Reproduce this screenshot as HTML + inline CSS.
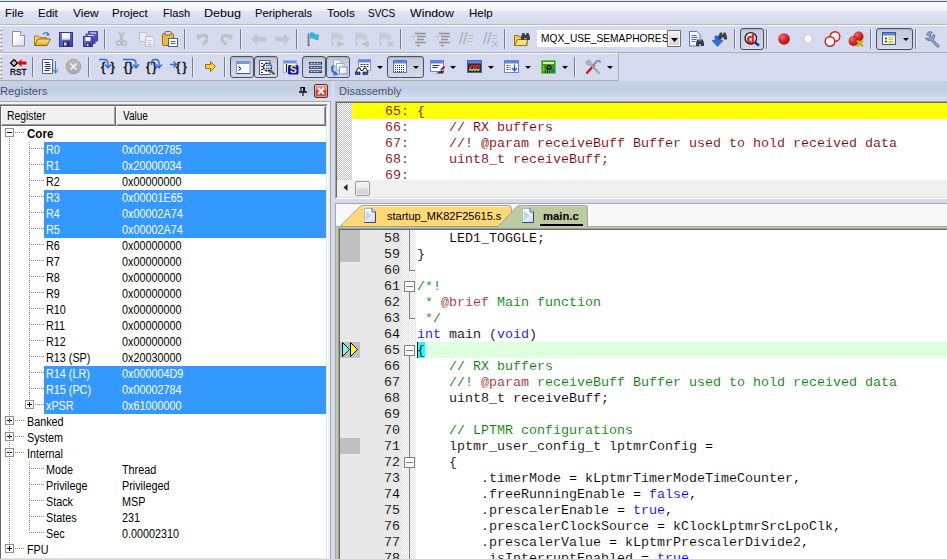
<!DOCTYPE html>
<html><head><meta charset="utf-8"><title>uVision</title>
<style>
*{box-sizing:border-box;margin:0;padding:0}
html,body{width:947px;height:559px;overflow:hidden;background:#d5daee}
body{position:relative;font-family:"Liberation Sans",sans-serif;font-size:12px;color:#000}
.abs,svg.i{position:absolute}
svg.i{overflow:visible}
#topline{left:0;top:0;width:947px;height:2px;background:linear-gradient(#e6e9f4 0 1px,#526272 1px 2px)}
#menubar{left:0;top:2px;width:947px;height:23px;background:linear-gradient(#ffffff 0,#eef0f9 9px,#dfe3f2 9px,#d5daee 22px,#b4b9c9 22px,#b4b9c9 23px)}
#menubar span{position:absolute;top:3px;font-size:12.5px;line-height:16px;white-space:nowrap}
.grip{position:absolute;left:0;width:2px;height:24px;background:repeating-linear-gradient(#fff 0 1px,#9aa2b6 1px 3px,transparent 3px 4px)}
.grip:after{content:"";position:absolute;left:0;top:0;width:1px;height:24px;background:repeating-linear-gradient(#fff 0 2px,transparent 2px 4px)}
.sep{position:absolute;width:1px;height:20px;background:#747c90}
.sep:after{content:"";position:absolute;left:1px;top:0;width:1px;height:20px;background:#eef1f8}
.pbtn{position:absolute;height:22px;border:1px solid #4b5262;border-radius:3px;background:linear-gradient(#c3c9da,#cdd3e3 60%,#d5dae8);box-shadow:inset 0 1px 1px #aab1c4}
.dd{position:absolute;width:0;height:0;border:3px solid transparent;border-top:3px solid #000;border-bottom:0}
.phead{top:81px;height:20px;background:linear-gradient(#c8d3e4,#bfcde1 40%,#d6e0ef);font-size:12px;line-height:20px;color:#4c5870;white-space:nowrap}
.rrow{position:absolute;left:0;height:16px;font-size:11px;line-height:16px;white-space:nowrap}
.t{position:absolute;font-size:12px;line-height:16px;white-space:nowrap;transform:scaleX(.9);transform-origin:0 0}
.w{color:#fff}
.tx{position:absolute;white-space:nowrap;transform-origin:0 0}
.code{font-family:"Liberation Mono",monospace;font-size:13.33px;line-height:16px;white-space:pre;position:absolute;-webkit-text-stroke:.1px #fff}
.g{color:#008000}.b{color:#0000ff}.m{color:#800000}.r{color:#a52a2a}
.ln{position:absolute;font-family:"Liberation Mono",monospace;font-size:13.33px;line-height:16px;text-align:right;width:60px;-webkit-text-stroke:.1px #e8e8e8}
</style></head><body>
<div id="topline" class="abs"></div>
<div id="menubar" class="abs">
</div>
<div class="tx" style="left:5px;top:5.02px;font-size:11.5px;line-height:16px;transform:scaleX(1);">File</div>
<div class="tx" style="left:38px;top:5.02px;font-size:11.5px;line-height:16px;transform:scaleX(1);">Edit</div>
<div class="tx" style="left:73px;top:5.02px;font-size:11.5px;line-height:16px;transform:scaleX(1.04);">View</div>
<div class="tx" style="left:112px;top:5.02px;font-size:11.5px;line-height:16px;transform:scaleX(1);">Project</div>
<div class="tx" style="left:163.04px;top:5.02px;font-size:11.5px;line-height:16px;transform:scaleX(0.963);">Flash</div>
<div class="tx" style="left:203.91px;top:5.02px;font-size:11.5px;line-height:16px;transform:scaleX(1.0938);">Debug</div>
<div class="tx" style="left:255.02px;top:5.02px;font-size:11.5px;line-height:16px;transform:scaleX(0.9825);">Peripherals</div>
<div class="tx" style="left:327px;top:5.02px;font-size:11.5px;line-height:16px;transform:scaleX(1.0385);">Tools</div>
<div class="tx" style="left:368.13px;top:5.02px;font-size:11.5px;line-height:16px;transform:scaleX(0.8667);">SVCS</div>
<div class="tx" style="left:410px;top:5.02px;font-size:11.5px;line-height:16px;transform:scaleX(1.0732);">Window</div>
<div class="tx" style="left:469px;top:5.02px;font-size:11.5px;line-height:16px;transform:scaleX(1);">Help</div>
<div class="abs" style="left:0;top:25px;width:947px;height:1px;background:#fbfcfe"></div>
<div class="abs" style="left:0;top:52px;width:947px;height:1px;background:#aeacb2"></div>
<div class="abs" style="left:0;top:53px;width:618px;height:1px;background:#fbfcfe"></div>
<div class="abs" style="left:0;top:80px;width:619px;height:1px;background:#aeacb2"></div>
<div class="abs" style="left:618px;top:53px;width:1px;height:28px;background:#aeacb2"></div>
<div class="abs grip" style="top:28px"></div>
<div class="abs grip" style="top:56px"></div>
<div class="sep" style="left:104px;top:29px"></div>
<div class="sep" style="left:184px;top:29px"></div>
<div class="sep" style="left:240px;top:29px"></div>
<div class="sep" style="left:296px;top:29px"></div>
<div class="sep" style="left:400px;top:29px"></div>
<div class="sep" style="left:504px;top:29px"></div>
<div class="sep" style="left:734px;top:29px"></div>
<div class="sep" style="left:766px;top:29px"></div>
<div class="sep" style="left:870px;top:29px"></div>
<div class="sep" style="left:915px;top:29px"></div>
<div class="sep" style="left:32px;top:57px"></div>
<div class="sep" style="left:88px;top:57px"></div>
<div class="sep" style="left:192px;top:57px"></div>
<div class="sep" style="left:224px;top:57px"></div>
<div class="sep" style="left:574px;top:57px"></div>
<svg class="i" style="left:12px;top:31px" width="13" height="16" viewBox="0 0 13 16" ><defs><linearGradient id="gd" x1="0" y1="0" x2="1" y2="1"><stop offset=".3" stop-color="#fff"/><stop offset="1" stop-color="#d9dff0"/></linearGradient><linearGradient id="gs" x1="0" y1="0" x2="1" y2="1"><stop offset="0" stop-color="#7d7ddc"/><stop offset="1" stop-color="#3a3aa4"/></linearGradient><linearGradient id="gf" x1="0" y1="0" x2="0" y2="1"><stop offset="0" stop-color="#fbe38e"/><stop offset="1" stop-color="#eaa91c"/></linearGradient></defs><path d="M.5 .5h8l4 4v10.500h-12z" fill="url(#gd)" stroke="#8f9095"/><path d="M8.500 .5v4h4" fill="#f2f4fa" stroke="#8f9095"/></svg>
<svg class="i" style="left:34px;top:31px" width="17" height="16" viewBox="0 0 17 16" ><path d="M.5 14.500v-9.500h4l1.500 1.500h6.500v2" fill="#f2cf6e" stroke="#a9822a"/><path d="M.5 14.500l3.500-6.500h12.500l-3.500 6.500z" fill="url(#gf)" stroke="#8a6414"/><path d="M8.500 3.500c2-2.500 5-2.500 6.500 0" fill="none" stroke="#4f7cc4" stroke-width="1.200"/><path d="M13.500 1.500l2.300 2.800-3.300.500z" fill="#3b66b8"/></svg>
<svg class="i" style="left:59px;top:32px" width="14" height="15" viewBox="0 0 14 15" ><rect x=".5" y=".5" width="13" height="14" fill="url(#gs)" stroke="#34349a"/><rect x="3" y="1" width="8" height="6.500" fill="#f4f5fb"/><path d="M3 6.500h8v1h-8z" fill="#c8cbe2"/><rect x="4" y="9.500" width="6.500" height="5" fill="#2a2a62"/><rect x="5" y="10.500" width="2.500" height="3" fill="#d8d9e8"/></svg>
<svg class="i" style="left:83px;top:31px" width="15" height="16" viewBox="0 0 15 16" ><rect x="5.500" y=".5" width="9" height="9.500" fill="url(#gs)" stroke="#4a4aae"/><rect x="7.500" y="1.500" width="5.500" height="2" fill="#e8e9f8"/><rect x="3" y="3" width="9" height="9.500" fill="url(#gs)" stroke="#4a4aae"/><rect x="5" y="4" width="5.500" height="2" fill="#e8e9f8"/><rect x=".5" y="5.500" width="9" height="10" fill="url(#gs)" stroke="#34349a"/><rect x="2.500" y="6" width="5" height="4" fill="#f2f3fb"/><rect x="3" y="12" width="4.500" height="3.500" fill="#2a2a62"/><rect x="3.800" y="12.800" width="1.700" height="2.200" fill="#d8d9e8"/></svg>
<svg class="i" style="left:116px;top:31px" width="11" height="16" viewBox="0 0 11 16" ><path d="M3 .500l3.500 9M8 .500l-3.500 9" stroke="#b4b8c2" stroke-width="1.600" fill="none"/><circle cx="2.800" cy="12.300" r="2.200" fill="none" stroke="#b4b8c2" stroke-width="1.500"/><circle cx="8.200" cy="12.300" r="2.200" fill="none" stroke="#b4b8c2" stroke-width="1.500"/></svg>
<svg class="i" style="left:139px;top:31px" width="16" height="16" viewBox="0 0 16 16" ><path d="M.5 1.500h6l2 2v7h-8z" fill="#eceef3" stroke="#b9bdc8"/><path d="M6.500 5.500h6l2.500 2.500v7h-8.500z" fill="#f2f3f7" stroke="#b9bdc8"/><path d="M8.500 9.500h4M8.500 11.500h4M8.500 13.500h4" stroke="#c5c8d2"/></svg>
<svg class="i" style="left:162px;top:31px" width="16" height="16" viewBox="0 0 16 16" ><rect x=".5" y="2.500" width="11" height="12" rx="1" fill="#e9b93f" stroke="#9a6c10"/><rect x="3" y=".500" width="6" height="3.500" rx="1" fill="#d8d8de" stroke="#6a6a72"/><rect x="6.500" y="7.500" width="9" height="8" fill="#f6f7fb" stroke="#56607c"/><path d="M8.500 10.500h5M8.500 12.500h5" stroke="#56607c"/></svg>
<svg class="i" style="left:196px;top:32px" width="13" height="14" viewBox="0 0 13 14" ><path d="M3.500 5.500c2-3.500 8-3 7.500 1.500c-.300 2.500-2 4-4.500 5.500" fill="none" stroke="#bcbfc9" stroke-width="2.800"/><path d="M0 2.500l6.500 .500l-4.500 5.500z" fill="#bcbfc9"/></svg>
<svg class="i" style="left:220px;top:32px" width="13" height="14" viewBox="0 0 13 14" ><path d="M9.500 5.500c-2-3.500-8-3-7.500 1.500c.300 2.500 2 4 4.500 5.500" fill="none" stroke="#bcbfc9" stroke-width="2.800"/><path d="M13 2.500l-6.500 .500l4.500 5.500z" fill="#bcbfc9"/></svg>
<svg class="i" style="left:251px;top:33px" width="15" height="12" viewBox="0 0 15 12" ><path d="M0 6l6-6v3.500h9v5h-9v3.500z" fill="#c3c6cf"/></svg>
<svg class="i" style="left:275px;top:33px" width="15" height="12" viewBox="0 0 15 12" ><path d="M15 6l-6-6v3.500h-9v5h9v3.500z" fill="#c3c6cf"/></svg>
<svg class="i" style="left:306px;top:31px" width="16" height="16" viewBox="0 0 16 16" ><path d="M2.500 2.500v12" stroke="#7a7d84" stroke-width="1.800"/><path d="M3.500 2.500c1.500-2 3.500-1.500 5 0s3 1 4.500 .500l-.500 6c-1.500 .500-3 0-4.500-1s-3-1-4.500 .500z" fill="#2db9d2"/><path d="M2 14.500h1.500" stroke="#333" stroke-width="1.200"/></svg>
<svg class="i" style="left:330px;top:31px" width="16" height="16" viewBox="0 0 16 16" ><path d="M2.500 2.500v12" stroke="#c0c3cc" stroke-width="1.800"/><path d="M3.500 2.500c1.500-2 3.500-1.500 5 0s3 1 4.500 .500l-.500 6c-1.500 .500-3 0-4.500-1s-3-1-4.500 .500z" fill="#c9ccd5"/><path d="M7 13h7M7 13l3-2.500M7 13l3 2.500" stroke="#bfc2cb" stroke-width="1.900" fill="none"/></svg>
<svg class="i" style="left:354px;top:31px" width="16" height="16" viewBox="0 0 16 16" ><path d="M2.500 2.500v12" stroke="#c0c3cc" stroke-width="1.800"/><path d="M3.500 2.500c1.500-2 3.500-1.500 5 0s3 1 4.500 .500l-.500 6c-1.500 .500-3 0-4.500-1s-3-1-4.500 .500z" fill="#c9ccd5"/><path d="M8 13h7M15 13l-3-2.500M15 13l-3 2.500" stroke="#bfc2cb" stroke-width="1.900" fill="none"/></svg>
<svg class="i" style="left:378px;top:31px" width="16" height="16" viewBox="0 0 16 16" ><path d="M2.500 2.500v12" stroke="#c0c3cc" stroke-width="1.800"/><path d="M3.500 2.500c1.500-2 3.500-1.500 5 0s3 1 4.500 .500l-.500 6c-1.500 .500-3 0-4.500-1s-3-1-4.500 .500z" fill="#c9ccd5"/><path d="M10 10.500l5 5M15 10.500l-5 5" stroke="#bfc2cb" stroke-width="1.900" fill="none"/></svg>
<svg class="i" style="left:410px;top:31px" width="17" height="16" viewBox="0 0 17 16" ><path d="M5 2.500h11M7 5.500h9M7 8.500h7M5 11.500h11M7 14.500h3" stroke="#8f9199" stroke-width="1.500"/><path d="M7.500 .500v15" stroke="#a8abb5" stroke-width="1" stroke-dasharray="1 1"/><path d="M0 5.500h5M3 3.500l2 2l-2 2" stroke="#c0c3cd" fill="none"/></svg>
<svg class="i" style="left:434px;top:31px" width="17" height="16" viewBox="0 0 17 16" ><path d="M5 2.500h11M7 5.500h9M7 8.500h7M5 11.500h11M7 14.500h3" stroke="#8f9199" stroke-width="1.500"/><path d="M7.500 .500v15" stroke="#a8abb5" stroke-width="1" stroke-dasharray="1 1"/><path d="M0 5.500h5M3 3.500l2 2l-2 2" stroke="#c0c3cd" fill="none"/></svg>
<svg class="i" style="left:459px;top:32px" width="15" height="14" viewBox="0 0 15 14" ><path d="M4 0l-3.500 12M8 0l-3.500 12" stroke="#b1b4be" stroke-width="1.600"/><path d="M9 3.500h5M8.500 6.500h5.500M8 9.500h6" stroke="#b9bcc6"/></svg>
<svg class="i" style="left:483px;top:32px" width="16" height="15" viewBox="0 0 16 15" ><path d="M4 0l-3.500 12M8 0l-3.500 12" stroke="#b1b4be" stroke-width="1.600"/><path d="M9 3.500h5M8.500 6.500h5.500" stroke="#b9bcc6"/><path d="M9 9l6 6M15 9l-6 6" stroke="#bdc0ca" stroke-width="1.600"/></svg>
<svg class="i" style="left:514px;top:31px" width="17" height="16" viewBox="0 0 17 16" ><path d="M.5 14.500v-10h4l1 1.500h7.500v8.500z" fill="#f2c94f" stroke="#9a7410"/><path d="M.5 14.500l3-6h10l-1 6z" fill="#fbe08a" stroke="#9a7410"/><path d="M7 6l1.500-4h2l.500 2h1l.500-2h2l1.500 4v3h-3.500v-2h-2v2h-3.500z" fill="#3c3e48"/></svg>
<div class="abs" style="left:537px;top:30px;width:130px;height:17px;background:#fff;overflow:hidden">
<div class="tx" style="left:4.07px;top:0.19px;font-size:11px;line-height:16px;transform:scaleX(0.9265);">MQX_USE_SEMAPHORES</div>
</div>
<div class="abs" style="left:667px;top:30px;width:14px;height:17px;background:linear-gradient(#f4f4f4,#e2e2e2 50%,#d4d4d4);border:1px solid #707070;border-radius:1px;box-shadow:inset 0 0 0 1px #fbfbfb"></div>
<svg class="i" style="left:671px;top:38px" width="7" height="4" viewBox="0 0 7 4" ><path d="M0 0h7l-3.500 4z" fill="#000"/></svg>
<svg class="i" style="left:689px;top:31px" width="16" height="16" viewBox="0 0 16 16" ><path d="M.5 .5h7.500l3 3v11.500h-10.500z" fill="#f4f7fd" stroke="#5c79b8"/><path d="M2.500 4.500h5M2.500 6.500h6M2.500 8.500h5M2.500 10.500h4" stroke="#3d6fd0"/><path d="M7 12l1.200-3.500h2l.300 1.500h1l.300-1.500h2l1.200 3.500v3h-3v-2h-2v2h-3z" fill="#3c3e48"/></svg>
<svg class="i" style="left:712px;top:31px" width="16" height="16" viewBox="0 0 16 16" ><path d="M3 5h5v4.500h3l-5.500 6l-5.500-6h3z" fill="#2f6fe0" stroke="#1c4fb4" stroke-width=".6"/><path d="M6.500 5.500l1.400-4h2l.300 1.700h1l.300-1.700h2l1.500 4v3h-3.200v-2h-2.100v2h-3.200z" fill="#3c3e48"/></svg>
<div class="pbtn" style="left:740px;top:28px;width:24px"></div>
<svg class="i" style="left:744px;top:31px" width="17" height="17" viewBox="0 0 17 17" ><circle cx="6.800" cy="7.300" r="5.700" fill="#fff" stroke="#1e1e1e" stroke-width="1.400"/><path d="M11 11.500l4 3" stroke="#1b1b9e" stroke-width="2.200"/><text x="2.800" y="11.800" font-family="Liberation Sans,sans-serif" font-weight="bold" font-size="13" fill="#ee1111" stroke="#ee1111" stroke-width=".4">d</text></svg>
<svg class="i" style="left:778px;top:33px" width="13" height="13" viewBox="0 0 13 13" ><defs><radialGradient id="rb" cx=".35" cy=".3" r=".8"><stop offset="0" stop-color="#f07070"/><stop offset=".5" stop-color="#d02828"/><stop offset="1" stop-color="#a01010"/></radialGradient></defs><circle cx="6" cy="6" r="5.800" fill="url(#rb)"/></svg>
<svg class="i" style="left:803px;top:34px" width="11" height="11" viewBox="0 0 11 11" ><circle cx="5" cy="5" r="4.500" fill="#f7f7f7" stroke="#c5c5c5" stroke-width="1.200"/></svg>
<svg class="i" style="left:824px;top:31px" width="17" height="17" viewBox="0 0 17 17" ><circle cx="11" cy="5.500" r="4.800" fill="#fdf4f4" stroke="#d21f1f" stroke-width="1.400"/><circle cx="6" cy="10.500" r="4.800" fill="#fdf4f4" stroke="#d21f1f" stroke-width="1.400"/></svg>
<svg class="i" style="left:848px;top:31px" width="17" height="17" viewBox="0 0 17 17" ><circle cx="10.500" cy="5.500" r="5" fill="url(#rb)"/><circle cx="5.500" cy="10" r="5" fill="url(#rb)"/><path d="M9 9.500l6 6M15 9.500l-6 6" stroke="#c9b012" stroke-width="2.400"/></svg>
<div class="pbtn" style="left:876px;top:28px;width:37px"></div>
<svg class="i" style="left:882px;top:32px" width="14" height="13" viewBox="0 0 14 13" ><rect x=".5" y=".5" width="13" height="12" fill="#fbfbe8" stroke="#3d59a8"/><rect x="1" y="1" width="12" height="2.500" fill="#5a86e0"/><path d="M3 6.500h2M3 9.500h2" stroke="#1c2a60" stroke-width="1.400"/><path d="M6.500 5.500h5M6.500 7.500h5M6.500 9.500h5M6.500 11h5" stroke="#c8d400" stroke-width="1.200"/></svg>
<div class="dd" style="left:903px;top:38px"></div>
<svg class="i" style="left:925px;top:31px" width="16" height="16" viewBox="0 0 16 16" ><path d="M1.500 3.500c1-3 4-3.500 6-2l-2.500 2.500l1.500 1.500l2.800-2c1 2 .3 4-1.300 5l6.500 6.500c-.5 1-1.500 1.500-2.500 .800l-6.500-6.500c-2 .800-4.500-.500-5-2.500l3 1l1.500-1.500z" fill="#8fa3c8" stroke="#54688f" stroke-width=".8"/></svg>
<svg class="i" style="left:10px;top:59px" width="17" height="16" viewBox="0 0 17 16" ><path d="M.7 4l3.300-3.300l3.300 3.300l-3.300 3.300z" fill="#fff" stroke="#000" stroke-width="1.500"/><rect x="3" y="3" width="2" height="2" fill="#bbb"/><path d="M7 4l4.500-3.800v2.300h5v3h-5v2.300z" fill="#ee0000"/><text x="0" y="15.500" font-family="Liberation Sans,sans-serif" font-size="9.800" fill="#000" stroke="#000" stroke-width=".3" textLength="16.500" lengthAdjust="spacingAndGlyphs">RST</text></svg>
<svg class="i" style="left:42px;top:59px" width="17" height="16" viewBox="0 0 17 16" ><path d="M.5 .5h10v14h-10z" fill="#fdfdff" stroke="#52638f"/><path d="M2.500 3.500h5M3.500 5.500h5M2.500 7.500h6M3.500 9.500h5M2.500 11.500h5" stroke="#1c2c5c"/><path d="M13.500 2v12" stroke="#3f7ef0" stroke-width="1.100"/><path d="M11 10.500l2.500 3.500l2.500-3.500" fill="none" stroke="#3f7ef0" stroke-width="1.100"/></svg>
<svg class="i" style="left:66px;top:59px" width="16" height="16" viewBox="0 0 16 16" ><defs><linearGradient id="gx" x1="0" y1="0" x2="0" y2="1"><stop offset="0" stop-color="#bdbdbd"/><stop offset="1" stop-color="#a6a6a6"/></linearGradient></defs><circle cx="7.500" cy="7.500" r="7.300" fill="url(#gx)" stroke="#a2a2a2"/><path d="M4.500 4.500l6 6M10.500 4.500l-6 6" stroke="#f4f4f4" stroke-width="1.700"/></svg>
<svg class="i" style="left:99px;top:58px" width="17" height="17" viewBox="0 0 17 17" ><path d="M0 1.500h5q4 0 4 4v4M6 6.500l3 3.500l3-3.500" fill="none" stroke="#2b6be4" stroke-width="1.400"/><text x="2" y="12.600" font-family="Liberation Sans,sans-serif" font-size="13" fill="#111" stroke="#111" stroke-width=".45">{</text><text x="11.5" y="12.600" font-family="Liberation Sans,sans-serif" font-size="13" fill="#111" stroke="#111" stroke-width=".45">}</text></svg>
<svg class="i" style="left:123px;top:58px" width="17" height="17" viewBox="0 0 17 17" ><path d="M0 1.500h9q4 0 4 4v4M10 6.500l3 3.500l3-3.500" fill="none" stroke="#2b6be4" stroke-width="1.400"/><text x="0.8" y="12.600" font-family="Liberation Sans,sans-serif" font-size="13" fill="#111" stroke="#111" stroke-width=".45">{</text><text x="5.5" y="12.600" font-family="Liberation Sans,sans-serif" font-size="13" fill="#111" stroke="#111" stroke-width=".45">}</text></svg>
<svg class="i" style="left:146px;top:58px" width="17" height="17" viewBox="0 0 17 17" ><path d="M5.500 7v-2q0-3.500 3.500-3.500h.500q3.500 0 3.500 3.500v5M10 6.500l3 3.500l3-3.500" fill="none" stroke="#2b6be4" stroke-width="1.400"/><text x="0" y="12.600" font-family="Liberation Sans,sans-serif" font-size="13" fill="#111" stroke="#111" stroke-width=".45">{</text><text x="6.2" y="12.600" font-family="Liberation Sans,sans-serif" font-size="13" fill="#111" stroke="#111" stroke-width=".45">}</text></svg>
<svg class="i" style="left:170px;top:58px" width="17" height="17" viewBox="0 0 17 17" ><path d="M0 6.500h6M3.500 3.500l3 3l-3 3" fill="none" stroke="#2b6be4" stroke-width="1.400"/><text x="6" y="12.600" font-family="Liberation Sans,sans-serif" font-size="13" fill="#111" stroke="#111" stroke-width=".45">{</text><text x="12.5" y="12.600" font-family="Liberation Sans,sans-serif" font-size="13" fill="#111" stroke="#111" stroke-width=".45">}</text></svg>
<svg class="i" style="left:205px;top:61px" width="11" height="11" viewBox="0 0 11 11" ><path d="M.5 3.500h5v-3l5 5l-5 5v-3h-5z" fill="#f6d233" stroke="#8a6a00" stroke-width=".9"/></svg>
<div class="pbtn" style="left:230px;top:56px;width:24px"></div>
<div class="pbtn" style="left:254px;top:56px;width:24px"></div>
<div class="pbtn" style="left:302px;top:56px;width:24px"></div>
<div class="pbtn" style="left:326px;top:56px;width:24px"></div>
<div class="pbtn" style="left:387px;top:56px;width:37px"></div>
<svg class="i" style="left:236px;top:61px" width="15" height="13" viewBox="0 0 15 13" ><rect x=".5" y=".5" width="13.500" height="12" fill="#fbfcff" stroke="#8097c6"/><rect x="1" y="1" width="12.500" height="2" fill="#6c98ee"/><path d="M.5 12.500h13.500" stroke="#3c527e"/><path d="M2.500 5.500l2.500 2l-2.500 2" fill="none" stroke="#000" stroke-width="1"/></svg>
<svg class="i" style="left:259px;top:60px" width="17" height="16" viewBox="0 0 17 16" ><rect x=".5" y=".5" width="10.500" height="14" fill="#fbfcff" stroke="#4a5f8c"/><path d="M2 3.500h2M2 6.500h2M2 9.500h2M2 12.500h2" stroke="#333"/><circle cx="8.500" cy="7" r="4" fill="#f4f8fe" stroke="#111" stroke-width="1.300" stroke-dasharray="2.500 .700"/><path d="M10 3.800q2.500 1 2.500 4" fill="none" stroke="#2a9af0" stroke-width="1.200"/><path d="M7 5.500h3.500M7 8.500h3.500" stroke="#3a4a78" stroke-width="1.400" stroke-dasharray="1.500 .600"/><path d="M11.500 10.500l4 4" stroke="#555" stroke-width="2"/></svg>
<svg class="i" style="left:283px;top:60px" width="16" height="15" viewBox="0 0 16 15" ><rect x=".5" y=".5" width="13" height="12" fill="#fdfdfd" stroke="#9db2e2"/><rect x="1" y="1" width="12" height="2.500" fill="#6a93e6"/><path d="M3.500 4v8" stroke="#222" stroke-width="1.200"/><rect x="5" y="5" width="10.500" height="9.500" rx="1.500" fill="#0a0af0"/><text x="6.700" y="13.300" font-family="Liberation Sans,sans-serif" font-weight="bold" font-size="10.500" fill="#ffee00">S</text></svg>
<svg class="i" style="left:309px;top:61.5px" width="13" height="11" viewBox="0 0 13 11" ><rect x="0" y="0" width="13" height="2.600" fill="#2a3a68"/><rect x="0" y="4.200" width="13" height="2.600" fill="#2a3a68"/><rect x="0" y="8.400" width="13" height="2.600" fill="#2a3a68"/><path d="M1.500 1.300h10M1.500 5.500h10M1.500 9.700h10" stroke="#c4dafc" stroke-width="1.200" stroke-dasharray="2 1"/></svg>
<svg class="i" style="left:330px;top:59px" width="18" height="18" viewBox="0 0 18 18" ><path d="M4 6.500c-3 2-2.500 6.500 1.500 8" fill="none" stroke="#2f6fe0" stroke-width="2.200"/><path d="M3 16.500l5.500-.500l-3-4z" fill="#2f6fe0"/><rect x="3.500" y="1" width="7.500" height="6" fill="url(#gd)" stroke="#9aaed8"/><rect x="6.500" y="4.500" width="7.500" height="6.500" fill="url(#gd)" stroke="#9aaed8"/><rect x="9.500" y="8" width="7.500" height="7" fill="url(#gd)" stroke="#7f96c8"/></svg>
<svg class="i" style="left:355px;top:59px" width="17" height="16" viewBox="0 0 17 16" ><rect x="3.500" y=".5" width="12" height="11" fill="#fdfdfd" stroke="#7f98d4"/><rect x="4" y="1" width="11" height="2.500" fill="#5a86e0"/><path d="M5.500 5.500h8M5.500 7.500h8" stroke="#333" stroke-dasharray="2 1"/><path d="M.8 13.500l2.200-4.500h2l1 2.500h2l1-2.500h2l2.200 4.500" fill="#fff" stroke="#111" stroke-width="1"/><path d="M.500 13h4.500v2.500h-4.500zM8 13h4.500v2.500h-4.500z" fill="#2456d8" stroke="#111" stroke-width=".6"/></svg>
<div class="dd" style="left:377px;top:66px"></div>
<svg class="i" style="left:393px;top:60px" width="14" height="13" viewBox="0 0 14 13" ><rect x=".5" y=".5" width="13" height="12" fill="#fdfdfd" stroke="#5a74ba"/><rect x="1" y="1" width="12" height="2.500" fill="#5a86e0"/><path d="M2 5.500h10M2 7.500h10M2 9.500h10M2 11.500h10" stroke="#333" stroke-dasharray="1 1"/></svg>
<div class="dd" style="left:413px;top:66px"></div>
<svg class="i" style="left:430px;top:60px" width="16" height="14" viewBox="0 0 16 14" ><rect x=".5" y=".5" width="13" height="11" fill="#fdfdfd" stroke="#6b86c9"/><rect x="1" y="1" width="12" height="2.500" fill="#5a86e0"/><path d="M2.500 5.500h7M2.500 7.500h5" stroke="#333"/><path d="M6 13.500l5-3l3 1l-1 2z" fill="#333"/><path d="M11 10l3.500-3.500" stroke="#c01818" stroke-width="1.800"/></svg>
<div class="dd" style="left:450px;top:66px"></div>
<svg class="i" style="left:467px;top:60px" width="15" height="13" viewBox="0 0 15 13" ><rect x=".5" y=".5" width="14" height="12" fill="#2a2a3a" stroke="#4a64aa"/><rect x="1" y="1" width="13" height="2.500" fill="#5a86e0"/><path d="M2 7.500h2v-2h3v2h2v-2h3v2h1" fill="none" stroke="#ff2020" stroke-width="1.200"/><path d="M2 10.500l1.500-1.500l1.500 1.500l1.500-1.500l1.500 1.500l1.500-1.500l1.500 1.500l1.500-1.500" fill="none" stroke="#f0e020" stroke-width="1.100"/></svg>
<div class="dd" style="left:488px;top:66px"></div>
<svg class="i" style="left:504px;top:60px" width="15" height="13" viewBox="0 0 15 13" ><rect x=".5" y=".5" width="14" height="12" fill="#fdfdfd" stroke="#6b86c9"/><rect x="1" y="1" width="13" height="2.500" fill="#5a86e0"/><path d="M2.500 5.500h4M2.500 7.500h4M2.500 9.500h4" stroke="#444" stroke-dasharray="2 1"/><path d="M10.500 4.500v6M8 8l2.500 3l2.500-3" fill="none" stroke="#2b66d8" stroke-width="1.400"/></svg>
<div class="dd" style="left:525px;top:66px"></div>
<svg class="i" style="left:541px;top:60px" width="15" height="14" viewBox="0 0 15 14" ><rect x=".5" y=".5" width="14" height="13" fill="#3c9a1e" stroke="#5fd03a"/><rect x="2" y="2" width="11" height="2" fill="#d8f0c8"/><circle cx="8" cy="7.500" r="2.600" fill="#1a1a1a"/><circle cx="8" cy="7.500" r="1" fill="#9a9a9a"/><path d="M2.500 6v5" stroke="#e8e020" stroke-dasharray="1 1"/><path d="M4 12h6" stroke="#222" stroke-dasharray="1 1" stroke-width="2"/><circle cx="12" cy="11" r="1.800" fill="#1860e0"/></svg>
<div class="dd" style="left:562px;top:66px"></div>
<svg class="i" style="left:585px;top:59px" width="16" height="16" viewBox="0 0 16 16" ><path d="M1.500 14.500l8-9" stroke="#c81818" stroke-width="2.400"/><path d="M8 6.500l4-4.500c1.500-.5 3 0 3.500 1.500" fill="none" stroke="#8a8f9c" stroke-width="2"/><path d="M14.500 14.500l-9-9" stroke="#9aa0ae" stroke-width="2"/><path d="M2 1.500c2-1 4.500 .5 4 3l-1.500 1.500c-2 .500-4-1.500-3.500-3.500l2 1.500l1-1z" fill="#b4bac8" stroke="#7a8090" stroke-width=".6"/></svg>
<div class="dd" style="left:607px;top:66px"></div>
<div class="abs" style="left:0;top:81px;width:947px;height:478px;background:#d5daee"></div>
<div class="abs phead" style="left:0;width:331px"></div>
<div class="abs phead" style="left:335px;width:612px"></div>
<div class="tx" style="left:-0.02px;top:83.19px;font-size:11px;line-height:16px;transform:scaleX(1.0222);color:#46506e;">Registers</div>
<div class="tx" style="left:339px;top:83.19px;font-size:11px;line-height:16px;transform:scaleX(1);color:#46506e;">Disassembly</div>
<svg class="i" style="left:299px;top:87px" width="8" height="9" viewBox="0 0 8 9" ><path d="M1.500 .500h4.500M2 .500v4M5.500 .500v4" stroke="#000" stroke-width="1" fill="none"/><path d="M4.800 .500v4" stroke="#000" stroke-width="1.400"/><path d="M0 5h8" stroke="#000" stroke-width="1.400"/><path d="M4 5.500v3.500" stroke="#000" stroke-width="1.100"/></svg>
<div class="abs" style="left:314px;top:84px;width:14px;height:14px;border:1px solid #6e2a2a;border-radius:2px;background:linear-gradient(#e8a79c,#d46a5c 45%,#c0392b 55%,#cf6a55);box-shadow:inset 0 0 0 1px rgba(255,255,255,.35)"></div>
<svg class="i" style="left:317px;top:87px" width="8" height="8" viewBox="0 0 8 8" ><path d="M1 1l6 6M7 1l-6 6" stroke="#fff" stroke-width="2"/></svg>
<div class="abs" style="left:0;top:101px;width:331px;height:458px;background:#f2f2f2;border-top:1px solid #a8a8a8;border-right:1px solid #a8a8a8"></div>
<div class="abs" style="left:-1px;top:104px;width:329px;height:455px;background:#fff;border:1px solid;border-color:#a0a0a0 #fff #fff #a0a0a0"></div>
<div class="abs" style="left:0;top:105px;width:327px;height:454px;border:1px solid;border-color:#696969 #e3e3e3 #e3e3e3 #696969"></div>
<div class="abs" style="left:1px;top:106px;width:115px;height:20px;background:#f0f0f0;border:1px solid;border-color:#fff #696969 #696969 #fff;box-shadow:inset -1px -1px 0 #a0a0a0"></div>
<div class="abs" style="left:116px;top:106px;width:210px;height:20px;background:#f0f0f0;border:1px solid;border-color:#fff #696969 #696969 #fff;box-shadow:inset -1px -1px 0 #a0a0a0"></div>
<div class="tx" style="left:7.14px;top:107.84px;font-size:12px;line-height:16px;transform:scaleX(0.8636);">Register</div>
<div class="tx" style="left:123px;top:107.84px;font-size:12px;line-height:16px;transform:scaleX(0.8333);">Value</div>
<svg class="i" style="left:5px;top:128px" width="9" height="9" viewBox="0 0 9 9" ><rect x=".5" y=".5" width="8" height="8" fill="#fff" stroke="#919191"/><path d="M2 4.500h5" stroke="#000"/></svg>
<div class="abs" style="left:15px;top:132px;width:10px;height:1px;background:repeating-linear-gradient(90deg,#8c8c8c 0 1px,transparent 1px 2px)"></div>
<div class="tx" style="left:27px;top:125.84px;font-size:12px;line-height:16px;transform:scaleX(0.963);font-weight:bold;">Core</div>
<div class="abs" style="left:44px;top:142px;width:282px;height:16px;background:#3399ff"></div>
<div class="abs" style="left:31px;top:148px;width:13px;height:1px;background:repeating-linear-gradient(90deg,#8c8c8c 0 1px,transparent 1px 2px)"></div>
<div class="t w" style="left:46px;top:142px">R0</div>
<div class="t w" style="left:122.400px;top:142px">0x00002785</div>
<div class="abs" style="left:44px;top:158px;width:282px;height:16px;background:#3399ff"></div>
<div class="abs" style="left:31px;top:164px;width:13px;height:1px;background:repeating-linear-gradient(90deg,#8c8c8c 0 1px,transparent 1px 2px)"></div>
<div class="t w" style="left:46px;top:158px">R1</div>
<div class="t w" style="left:122.400px;top:158px">0x20000034</div>
<div class="abs" style="left:31px;top:180px;width:13px;height:1px;background:repeating-linear-gradient(90deg,#8c8c8c 0 1px,transparent 1px 2px)"></div>
<div class="t" style="left:46px;top:174px">R2</div>
<div class="t" style="left:122.400px;top:174px">0x00000000</div>
<div class="abs" style="left:44px;top:190px;width:282px;height:16px;background:#3399ff"></div>
<div class="abs" style="left:31px;top:196px;width:13px;height:1px;background:repeating-linear-gradient(90deg,#8c8c8c 0 1px,transparent 1px 2px)"></div>
<div class="t w" style="left:46px;top:190px">R3</div>
<div class="t w" style="left:122.400px;top:190px">0x00001E65</div>
<div class="abs" style="left:44px;top:206px;width:282px;height:16px;background:#3399ff"></div>
<div class="abs" style="left:31px;top:212px;width:13px;height:1px;background:repeating-linear-gradient(90deg,#8c8c8c 0 1px,transparent 1px 2px)"></div>
<div class="t w" style="left:46px;top:206px">R4</div>
<div class="t w" style="left:122.400px;top:206px">0x00002A74</div>
<div class="abs" style="left:44px;top:222px;width:282px;height:16px;background:#3399ff"></div>
<div class="abs" style="left:31px;top:228px;width:13px;height:1px;background:repeating-linear-gradient(90deg,#8c8c8c 0 1px,transparent 1px 2px)"></div>
<div class="t w" style="left:46px;top:222px">R5</div>
<div class="t w" style="left:122.400px;top:222px">0x00002A74</div>
<div class="abs" style="left:31px;top:244px;width:13px;height:1px;background:repeating-linear-gradient(90deg,#8c8c8c 0 1px,transparent 1px 2px)"></div>
<div class="t" style="left:46px;top:238px">R6</div>
<div class="t" style="left:122.400px;top:238px">0x00000000</div>
<div class="abs" style="left:31px;top:260px;width:13px;height:1px;background:repeating-linear-gradient(90deg,#8c8c8c 0 1px,transparent 1px 2px)"></div>
<div class="t" style="left:46px;top:254px">R7</div>
<div class="t" style="left:122.400px;top:254px">0x00000000</div>
<div class="abs" style="left:31px;top:276px;width:13px;height:1px;background:repeating-linear-gradient(90deg,#8c8c8c 0 1px,transparent 1px 2px)"></div>
<div class="t" style="left:46px;top:270px">R8</div>
<div class="t" style="left:122.400px;top:270px">0x00000000</div>
<div class="abs" style="left:31px;top:292px;width:13px;height:1px;background:repeating-linear-gradient(90deg,#8c8c8c 0 1px,transparent 1px 2px)"></div>
<div class="t" style="left:46px;top:286px">R9</div>
<div class="t" style="left:122.400px;top:286px">0x00000000</div>
<div class="abs" style="left:31px;top:308px;width:13px;height:1px;background:repeating-linear-gradient(90deg,#8c8c8c 0 1px,transparent 1px 2px)"></div>
<div class="t" style="left:46px;top:302px">R10</div>
<div class="t" style="left:122.400px;top:302px">0x00000000</div>
<div class="abs" style="left:31px;top:324px;width:13px;height:1px;background:repeating-linear-gradient(90deg,#8c8c8c 0 1px,transparent 1px 2px)"></div>
<div class="t" style="left:46px;top:318px">R11</div>
<div class="t" style="left:122.400px;top:318px">0x00000000</div>
<div class="abs" style="left:31px;top:340px;width:13px;height:1px;background:repeating-linear-gradient(90deg,#8c8c8c 0 1px,transparent 1px 2px)"></div>
<div class="t" style="left:46px;top:334px">R12</div>
<div class="t" style="left:122.400px;top:334px">0x00000000</div>
<div class="abs" style="left:31px;top:356px;width:13px;height:1px;background:repeating-linear-gradient(90deg,#8c8c8c 0 1px,transparent 1px 2px)"></div>
<div class="t" style="left:46px;top:350px">R13 (SP)</div>
<div class="t" style="left:122.400px;top:350px">0x20030000</div>
<div class="abs" style="left:44px;top:366px;width:282px;height:16px;background:#3399ff"></div>
<div class="abs" style="left:31px;top:372px;width:13px;height:1px;background:repeating-linear-gradient(90deg,#8c8c8c 0 1px,transparent 1px 2px)"></div>
<div class="t w" style="left:46px;top:366px">R14 (LR)</div>
<div class="t w" style="left:122.400px;top:366px">0x000004D9</div>
<div class="abs" style="left:44px;top:382px;width:282px;height:16px;background:#3399ff"></div>
<div class="abs" style="left:31px;top:388px;width:13px;height:1px;background:repeating-linear-gradient(90deg,#8c8c8c 0 1px,transparent 1px 2px)"></div>
<div class="t w" style="left:46px;top:382px">R15 (PC)</div>
<div class="t w" style="left:122.400px;top:382px">0x00002784</div>
<div class="abs" style="left:44px;top:398px;width:282px;height:16px;background:#3399ff"></div>
<svg class="i" style="left:25px;top:400px" width="9" height="9" viewBox="0 0 9 9" ><rect x=".5" y=".5" width="8" height="8" fill="#fff" stroke="#919191"/><path d="M2 4.500h5" stroke="#000"/><path d="M4.500 2v5" stroke="#000"/></svg>
<div class="abs" style="left:35px;top:404px;width:9px;height:1px;background:repeating-linear-gradient(90deg,#8c8c8c 0 1px,transparent 1px 2px)"></div>
<div class="t w" style="left:46px;top:398px">xPSR</div>
<div class="t w" style="left:122.400px;top:398px">0x61000000</div>
<svg class="i" style="left:5px;top:416px" width="9" height="9" viewBox="0 0 9 9" ><rect x=".5" y=".5" width="8" height="8" fill="#fff" stroke="#919191"/><path d="M2 4.500h5" stroke="#000"/><path d="M4.500 2v5" stroke="#000"/></svg>
<div class="abs" style="left:15px;top:420px;width:10px;height:1px;background:repeating-linear-gradient(90deg,#8c8c8c 0 1px,transparent 1px 2px)"></div>
<div class="t" style="left:27px;top:414px">Banked</div>
<svg class="i" style="left:5px;top:432px" width="9" height="9" viewBox="0 0 9 9" ><rect x=".5" y=".5" width="8" height="8" fill="#fff" stroke="#919191"/><path d="M2 4.500h5" stroke="#000"/><path d="M4.500 2v5" stroke="#000"/></svg>
<div class="abs" style="left:15px;top:436px;width:10px;height:1px;background:repeating-linear-gradient(90deg,#8c8c8c 0 1px,transparent 1px 2px)"></div>
<div class="t" style="left:27px;top:430px">System</div>
<svg class="i" style="left:5px;top:448px" width="9" height="9" viewBox="0 0 9 9" ><rect x=".5" y=".5" width="8" height="8" fill="#fff" stroke="#919191"/><path d="M2 4.500h5" stroke="#000"/></svg>
<div class="abs" style="left:15px;top:452px;width:10px;height:1px;background:repeating-linear-gradient(90deg,#8c8c8c 0 1px,transparent 1px 2px)"></div>
<div class="t" style="left:27px;top:446px">Internal</div>
<div class="abs" style="left:31px;top:468px;width:13px;height:1px;background:repeating-linear-gradient(90deg,#8c8c8c 0 1px,transparent 1px 2px)"></div>
<div class="t" style="left:46px;top:462px">Mode</div>
<div class="t" style="left:122.400px;top:462px">Thread</div>
<div class="abs" style="left:31px;top:484px;width:13px;height:1px;background:repeating-linear-gradient(90deg,#8c8c8c 0 1px,transparent 1px 2px)"></div>
<div class="t" style="left:46px;top:478px">Privilege</div>
<div class="t" style="left:122.400px;top:478px">Privileged</div>
<div class="abs" style="left:31px;top:500px;width:13px;height:1px;background:repeating-linear-gradient(90deg,#8c8c8c 0 1px,transparent 1px 2px)"></div>
<div class="t" style="left:46px;top:494px">Stack</div>
<div class="t" style="left:122.400px;top:494px">MSP</div>
<div class="abs" style="left:31px;top:516px;width:13px;height:1px;background:repeating-linear-gradient(90deg,#8c8c8c 0 1px,transparent 1px 2px)"></div>
<div class="t" style="left:46px;top:510px">States</div>
<div class="t" style="left:122.400px;top:510px">231</div>
<div class="abs" style="left:31px;top:532px;width:13px;height:1px;background:repeating-linear-gradient(90deg,#8c8c8c 0 1px,transparent 1px 2px)"></div>
<div class="t" style="left:46px;top:526px">Sec</div>
<div class="t" style="left:122.400px;top:526px">0.00002310</div>
<svg class="i" style="left:5px;top:544px" width="9" height="9" viewBox="0 0 9 9" ><rect x=".5" y=".5" width="8" height="8" fill="#fff" stroke="#919191"/><path d="M2 4.500h5" stroke="#000"/><path d="M4.500 2v5" stroke="#000"/></svg>
<div class="abs" style="left:15px;top:548px;width:10px;height:1px;background:repeating-linear-gradient(90deg,#8c8c8c 0 1px,transparent 1px 2px)"></div>
<div class="t" style="left:27px;top:542px">FPU</div>
<div class="abs" style="left:9px;top:138px;width:1px;height:408px;background:repeating-linear-gradient(#8c8c8c 0 1px,transparent 1px 2px)"></div>
<div class="abs" style="left:29px;top:142px;width:1px;height:258px;background:repeating-linear-gradient(#8c8c8c 0 1px,transparent 1px 2px)"></div>
<div class="abs" style="left:29px;top:462px;width:1px;height:71px;background:repeating-linear-gradient(#8c8c8c 0 1px,transparent 1px 2px)"></div>
<div class="abs" style="left:335px;top:101px;width:616px;height:98px;background:#fff;border:1px solid;border-color:#a0a0a0 #fff #fff #a0a0a0"></div>
<div class="abs" style="left:336px;top:102px;width:614px;height:96px;border:1px solid;border-color:#696969 #e3e3e3 #e3e3e3 #696969"></div>
<div class="abs" style="left:337px;top:103px;width:15px;height:77px;background-color:#fff;background-image:linear-gradient(45deg,#c0c0c0 25%,transparent 25%,transparent 75%,#c0c0c0 75%),linear-gradient(45deg,#c0c0c0 25%,transparent 25%,transparent 75%,#c0c0c0 75%);background-size:2px 2px;background-position:0 0,1px 1px"></div>
<div class="abs" style="left:352px;top:103px;width:595px;height:16px;background:#ffff00"></div>
<div class="abs" style="left:337px;top:103px;width:610px;height:77px;overflow:hidden">
<div class="code m" style="left:48px;top:1px;-webkit-text-stroke-color:#ff0">65: {</div>
<div class="code m" style="left:48px;top:17px">66:     // RX buffers</div>
<div class="code m" style="left:48px;top:33px">67:     //! @param receiveBuff Buffer used to hold received data</div>
<div class="code m" style="left:48px;top:49px">68:     uint8_t receiveBuff;</div>
<div class="code m" style="left:48px;top:65px">69: </div>
</div>
<div class="abs" style="left:337px;top:180px;width:610px;height:17px;background:#f0f0f0"></div>
<svg class="i" style="left:343px;top:184px" width="5" height="8" viewBox="0 0 5 8" ><path d="M4.500 0v7l-4-3.500z" fill="#222"/></svg>
<div class="abs" style="left:355px;top:181px;width:15px;height:15px;border:1px solid #979797;border-radius:2px;background:linear-gradient(#f4f4f4 0,#ebebeb 48%,#d9d9d9 52%,#cfcfcf);box-shadow:inset 0 0 0 1px rgba(255,255,255,.6)"></div>
<div class="abs" style="left:335px;top:203px;width:612px;height:23px;background:#f8f8f8;border-top:1px solid #a8a8a8;border-left:1px solid #a8a8a8"></div>
<div class="abs" style="left:335px;top:226px;width:612px;height:333px;background:#bccba0;border-top:1px solid #a8a8a8;border-left:1px solid #a8a8a8"></div>
<svg class="i" style="left:335px;top:203px" width="612" height="27" viewBox="0 0 612 27"><path d="M5 23.500L24.500 4q1.500-1.500 4-1.500H173q3 0 3.500 3L178 23.500z" fill="#ffd976" stroke="#9c9c9c" stroke-width="1"/><path d="M27 3.500H174" stroke="#fff4d0" stroke-width="1"/><path d="M163 23.500L181.500 4q1.500-1.500 4-1.500H250q2.500 0 2.500 2.500V24H163z" fill="#bccba0" stroke="#a0a0a0" stroke-width="1"/><path d="M185 3.500H250" stroke="#d4dec0" stroke-width="1"/><path d="M254.500 6v17" stroke="#fff" stroke-width="1"/><rect x="164" y="23" width="88" height="2" fill="#bccba0"/><rect x="205" y="21" width="43" height="2" fill="#000"/></svg>
<svg class="i" width="0" height="0" style="left:0;top:0"><defs><linearGradient id="gdoc" x1="0" y1="0" x2="1" y2="1"><stop offset=".2" stop-color="#fff"/><stop offset="1" stop-color="#c6d6f6"/></linearGradient></defs></svg>
<svg class="i" style="left:364px;top:208px" width="12" height="15" viewBox="0 0 12 15" ><path d="M.5 .5h7.500l3.500 3.500v10.500h-11z" fill="url(#gdoc)"/><path d="M.5 14.500v-14h7.500" fill="none" stroke="#a3b9e3"/><path d="M8 .5l3.500 3.500v10.500h-11" fill="none" stroke="#2f4778"/><path d="M8 .5v3.500h3.500" fill="#e9effb" stroke="#2f4778" stroke-width=".8"/><path d="M2 2.500l5.500 5l-5.500 5z" fill="#c2c4cc" fill-opacity=".75"/></svg>
<svg class="i" style="left:522px;top:208px" width="12" height="15" viewBox="0 0 12 15" ><path d="M.5 .5h7.500l3.500 3.500v10.500h-11z" fill="url(#gdoc)"/><path d="M.5 14.500v-14h7.500" fill="none" stroke="#a3b9e3"/><path d="M8 .5l3.500 3.500v10.500h-11" fill="none" stroke="#2f4778"/><path d="M8 .5v3.500h3.500" fill="#e9effb" stroke="#2f4778" stroke-width=".8"/><path d="M2 2.500l5.500 5l-5.500 5z" fill="#c2c4cc" fill-opacity=".75"/></svg>
<div class="tx" style="left:387px;top:208.19px;font-size:11px;line-height:16px;transform:scaleX(1);">startup_MK82F25615.s</div>
<div class="tx" style="left:542.97px;top:208.19px;font-size:11px;line-height:16px;transform:scaleX(1.0294);font-weight:bold;">main.c</div>
<div class="abs" style="left:338px;top:228px;width:613px;height:335px;background:#fff;border:1px solid;border-color:#a0a0a0 #fff #fff #a0a0a0"></div>
<div class="abs" style="left:339px;top:229px;width:611px;height:333px;border:1px solid;border-color:#696969 #e3e3e3 #e3e3e3 #696969"></div>
<div class="abs" style="left:340px;top:230px;width:62px;height:329px;background:#e8e8e8"></div>
<div class="abs" style="left:402px;top:230px;width:14px;height:329px;background-color:#fff;background-image:linear-gradient(45deg,#e4e4e4 25%,transparent 25%,transparent 75%,#e4e4e4 75%),linear-gradient(45deg,#e4e4e4 25%,transparent 25%,transparent 75%,#e4e4e4 75%);background-size:2px 2px;background-position:0 0,1px 1px"></div>
<div class="abs" style="left:340px;top:230px;width:20px;height:32px;background:#c0c0c0"></div>
<div class="abs" style="left:340px;top:438px;width:20px;height:16px;background:#c0c0c0"></div>
<div class="abs" style="left:417px;top:342px;width:530px;height:16px;background:#e0ffe0"></div>
<div class="abs" style="left:417px;top:342px;width:8px;height:16px;background:#18ffff"></div>
<div class="abs" style="left:417px;top:342px;width:1px;height:16px;background:#000"></div>
<div class="ln" style="left:340px;top:231px">58</div>
<div class="code" style="left:417px;top:231px">    LED1_TOGGLE;</div>
<div class="ln" style="left:340px;top:247px">59</div>
<div class="code" style="left:417px;top:247px">}</div>
<div class="ln" style="left:340px;top:263px">60</div>
<div class="ln" style="left:340px;top:279px">61</div>
<div class="code" style="left:417px;top:279px"><span class="g">/*!</span></div>
<div class="ln" style="left:340px;top:295px">62</div>
<div class="code" style="left:417px;top:295px"><span class="g"> * </span><span class="r">@brief</span><span class="g"> Main function</span></div>
<div class="ln" style="left:340px;top:311px">63</div>
<div class="code" style="left:417px;top:311px"><span class="g"> */</span></div>
<div class="ln" style="left:340px;top:327px">64</div>
<div class="code" style="left:417px;top:327px"><span class="b">int</span> main (<span class="b">void</span>)</div>
<div class="ln" style="left:340px;top:343px">65</div>
<div class="code" style="left:417px;top:343px;-webkit-text-stroke-color:#18ffff">{</div>
<div class="ln" style="left:340px;top:359px">66</div>
<div class="code" style="left:417px;top:359px">    <span class="g">// RX buffers</span></div>
<div class="ln" style="left:340px;top:375px">67</div>
<div class="code" style="left:417px;top:375px">    <span class="g">//! </span><span class="r">@param</span><span class="g"> receiveBuff Buffer used to hold received data</span></div>
<div class="ln" style="left:340px;top:391px">68</div>
<div class="code" style="left:417px;top:391px">    uint8_t receiveBuff;</div>
<div class="ln" style="left:340px;top:407px">69</div>
<div class="ln" style="left:340px;top:423px">70</div>
<div class="code" style="left:417px;top:423px">    <span class="g">// LPTMR configurations</span></div>
<div class="ln" style="left:340px;top:439px">71</div>
<div class="code" style="left:417px;top:439px">    lptmr_user_config_t lptmrConfig =</div>
<div class="ln" style="left:340px;top:455px">72</div>
<div class="code" style="left:417px;top:455px">    {</div>
<div class="ln" style="left:340px;top:471px">73</div>
<div class="code" style="left:417px;top:471px">        .timerMode = kLptmrTimerModeTimeCounter,</div>
<div class="ln" style="left:340px;top:487px">74</div>
<div class="code" style="left:417px;top:487px">        .freeRunningEnable = <span class="b">false</span>,</div>
<div class="ln" style="left:340px;top:503px">75</div>
<div class="code" style="left:417px;top:503px">        .prescalerEnable = <span class="b">true</span>,</div>
<div class="ln" style="left:340px;top:519px">76</div>
<div class="code" style="left:417px;top:519px">        .prescalerClockSource = kClockLptmrSrcLpoClk,</div>
<div class="ln" style="left:340px;top:535px">77</div>
<div class="code" style="left:417px;top:535px">        .prescalerValue = kLptmrPrescalerDivide2,</div>
<div class="ln" style="left:340px;top:551px">78</div>
<div class="code" style="left:417px;top:551px">        .isInterruptEnabled = <span class="b">true</span></div>
<div class="abs" style="left:409px;top:230px;width:1px;height:40px;background:#808080"></div>
<div class="abs" style="left:409px;top:270px;width:6px;height:1px;background:#808080"></div>
<svg class="i" style="left:404px;top:281px" width="11" height="11" viewBox="0 0 11 11" ><rect x=".5" y=".5" width="10" height="10" fill="#f8f8f8" stroke="#808080"/><path d="M2 5.500h7" stroke="#808080"/></svg>
<div class="abs" style="left:409px;top:292px;width:1px;height:26px;background:#808080"></div>
<div class="abs" style="left:409px;top:318px;width:6px;height:1px;background:#808080"></div>
<svg class="i" style="left:404px;top:345px" width="11" height="11" viewBox="0 0 11 11" ><rect x=".5" y=".5" width="10" height="10" fill="#f8f8f8" stroke="#808080"/><path d="M2 5.500h7" stroke="#808080"/></svg>
<div class="abs" style="left:409px;top:356px;width:1px;height:102px;background:#808080"></div>
<svg class="i" style="left:404px;top:457px" width="11" height="11" viewBox="0 0 11 11" ><rect x=".5" y=".5" width="10" height="10" fill="#f8f8f8" stroke="#808080"/><path d="M2 5.500h7" stroke="#808080"/></svg>
<div class="abs" style="left:409px;top:468px;width:1px;height:91px;background:#808080"></div>
<div class="abs" style="left:340px;top:342px;width:20px;height:16px;background:#c0c0c0"></div>
<svg class="i" style="left:342px;top:342px" width="16" height="15" viewBox="0 0 16 15" ><path d="M.5 .5l7 7l-7 7z" fill="#66ffff" stroke="#000" stroke-width="1"/><path d="M8.500 .5l7 7l-7 7z" fill="#ffff00" stroke="#000" stroke-width="1"/></svg>
</body></html>
